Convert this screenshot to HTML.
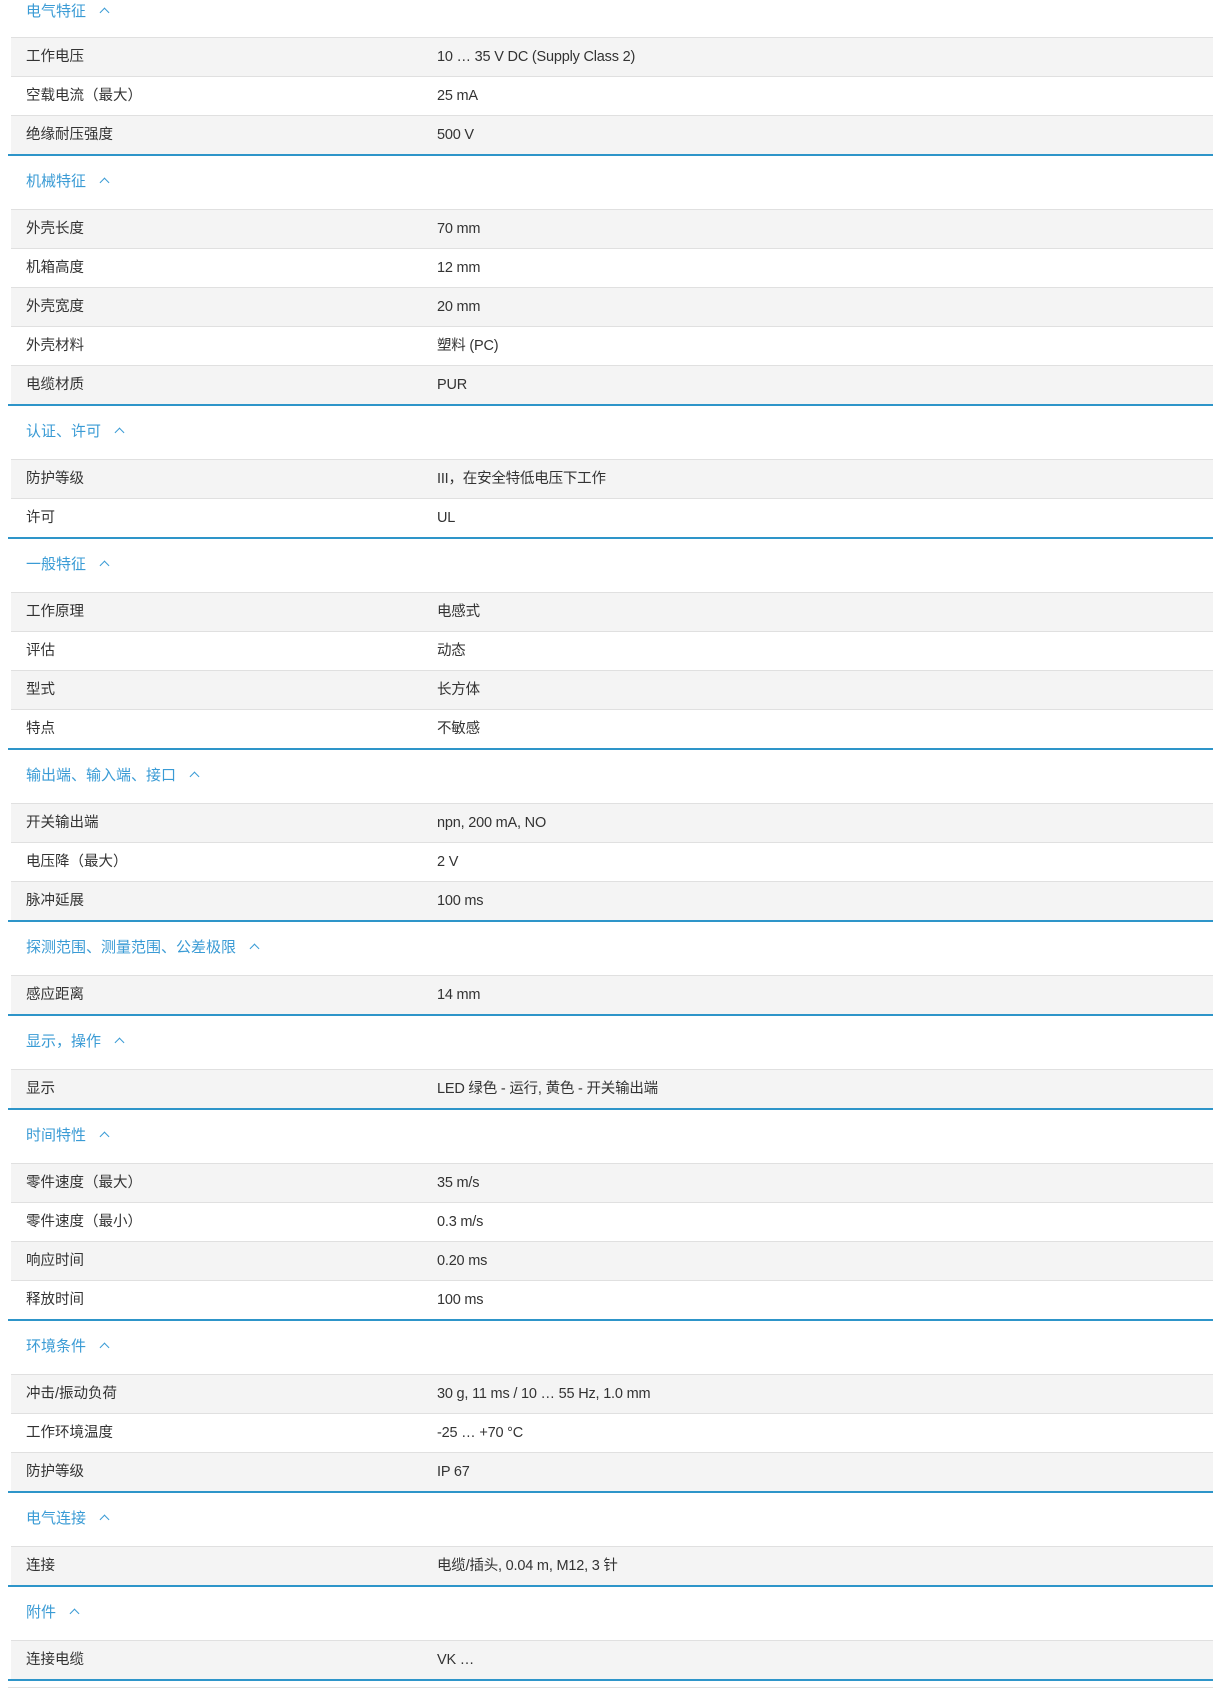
<!DOCTYPE html>
<html><head><meta charset="utf-8"><style>
*{margin:0;padding:0;box-sizing:border-box}
body{width:1213px;height:1688px;background:#fff;font-family:"Liberation Sans","Noto Sans CJK SC",sans-serif;color:#333;overflow:hidden}
.wrap{margin-left:8px;width:1205px}
.h{height:55px;border-top:2px solid #2e95c9;position:relative}
.h span{position:absolute;left:18px;top:14px;font-size:15px;color:#3a9bd5}
.h span i{display:inline-block;width:7px;height:7px;border-left:1.3px solid #3a9bd5;border-top:1.3px solid #3a9bd5;transform:rotate(45deg);margin-left:15px;position:relative;top:0px}
.h.first{height:37px;border-top:none}
.h.first span{top:0px}
.r{height:39px;margin-left:3px;border-top:1px solid #e0e0e0;position:relative;font-size:14.5px;line-height:38px;background:#fff}
.sec .r:nth-child(even){background:#f4f4f4}
.r .l{position:absolute;left:15px}
.r .v{position:absolute;left:426px;letter-spacing:-0.2px}
.end{border-top:2px solid #2e95c9;height:9px;border-bottom:1px solid #e0e0e0}
</style></head><body><div class="wrap">
<div class="sec"><div class="h first"><span>电气特征<i></i></span></div>
<div class="r"><span class="l">工作电压</span><span class="v">10 … 35 V DC (Supply Class 2)</span></div>
<div class="r"><span class="l">空载电流（最大）</span><span class="v">25 mA</span></div>
<div class="r"><span class="l">绝缘耐压强度</span><span class="v">500 V</span></div></div>
<div class="sec"><div class="h"><span>机械特征<i></i></span></div>
<div class="r"><span class="l">外壳长度</span><span class="v">70 mm</span></div>
<div class="r"><span class="l">机箱高度</span><span class="v">12 mm</span></div>
<div class="r"><span class="l">外壳宽度</span><span class="v">20 mm</span></div>
<div class="r"><span class="l">外壳材料</span><span class="v">塑料 (PC)</span></div>
<div class="r"><span class="l">电缆材质</span><span class="v">PUR</span></div></div>
<div class="sec"><div class="h"><span>认证、许可<i></i></span></div>
<div class="r"><span class="l">防护等级</span><span class="v">III，在安全特低电压下工作</span></div>
<div class="r"><span class="l">许可</span><span class="v">UL</span></div></div>
<div class="sec"><div class="h"><span>一般特征<i></i></span></div>
<div class="r"><span class="l">工作原理</span><span class="v">电感式</span></div>
<div class="r"><span class="l">评估</span><span class="v">动态</span></div>
<div class="r"><span class="l">型式</span><span class="v">长方体</span></div>
<div class="r"><span class="l">特点</span><span class="v">不敏感</span></div></div>
<div class="sec"><div class="h"><span>输出端、输入端、接口<i></i></span></div>
<div class="r"><span class="l">开关输出端</span><span class="v">npn, 200 mA, NO</span></div>
<div class="r"><span class="l">电压降（最大）</span><span class="v">2 V</span></div>
<div class="r"><span class="l">脉冲延展</span><span class="v">100 ms</span></div></div>
<div class="sec"><div class="h"><span>探测范围、测量范围、公差极限<i></i></span></div>
<div class="r"><span class="l">感应距离</span><span class="v">14 mm</span></div></div>
<div class="sec"><div class="h"><span>显示，操作<i></i></span></div>
<div class="r"><span class="l">显示</span><span class="v">LED 绿色 - 运行, 黄色 - 开关输出端</span></div></div>
<div class="sec"><div class="h"><span>时间特性<i></i></span></div>
<div class="r"><span class="l">零件速度（最大）</span><span class="v">35 m/s</span></div>
<div class="r"><span class="l">零件速度（最小）</span><span class="v">0.3 m/s</span></div>
<div class="r"><span class="l">响应时间</span><span class="v">0.20 ms</span></div>
<div class="r"><span class="l">释放时间</span><span class="v">100 ms</span></div></div>
<div class="sec"><div class="h"><span>环境条件<i></i></span></div>
<div class="r"><span class="l">冲击/振动负荷</span><span class="v">30 g, 11 ms / 10 … 55 Hz, 1.0 mm</span></div>
<div class="r"><span class="l">工作环境温度</span><span class="v">-25 … +70 °C</span></div>
<div class="r"><span class="l">防护等级</span><span class="v">IP 67</span></div></div>
<div class="sec"><div class="h"><span>电气连接<i></i></span></div>
<div class="r"><span class="l">连接</span><span class="v">电缆/插头, 0.04 m, M12, 3 针</span></div></div>
<div class="sec"><div class="h"><span>附件<i></i></span></div>
<div class="r"><span class="l">连接电缆</span><span class="v">VK …</span></div></div>
<div class="end"></div>
</div></body></html>
